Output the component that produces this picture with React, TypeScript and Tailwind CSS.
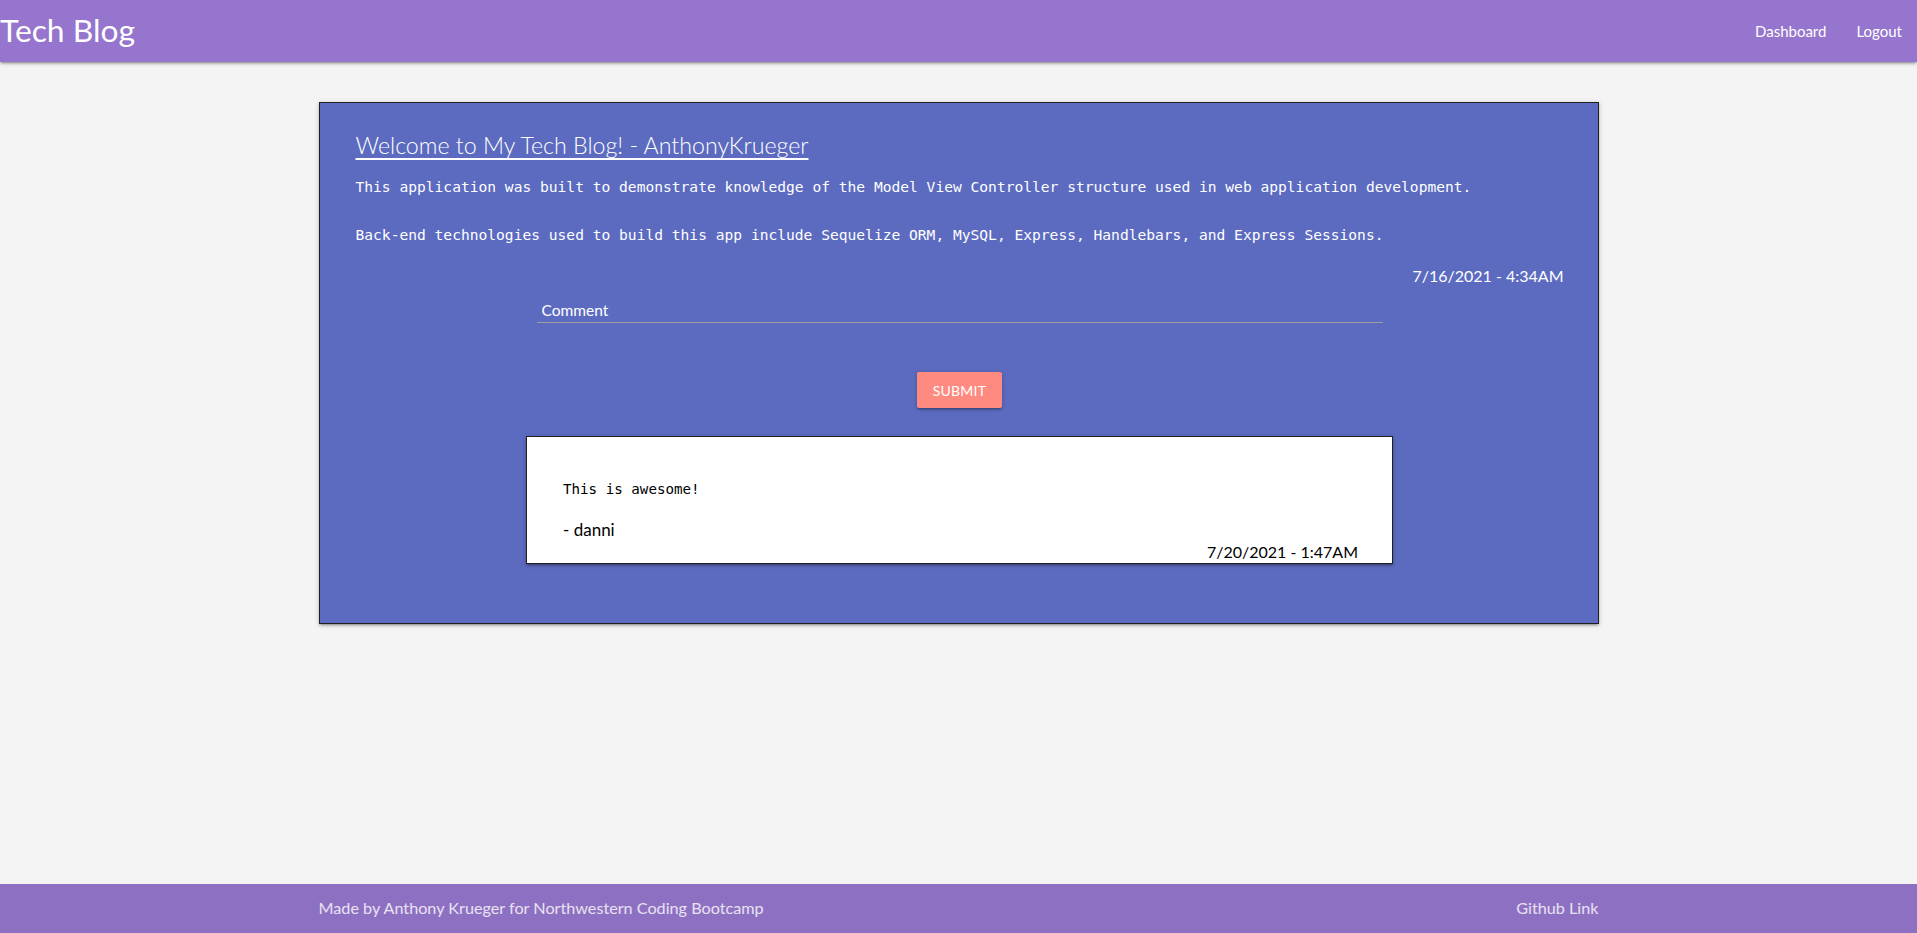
const SANS = "font-['Lato','Open_Sans',sans-serif]";
const MONO = "font-['DejaVu_Sans_Mono','Liberation_Mono',monospace]";

const post = {
  title: "Welcome to My Tech Blog! - AnthonyKrueger",
  body: [
    "This application was built to demonstrate knowledge of the Model View Controller structure used in web application development.",
    "Back-end technologies used to build this app include Sequelize ORM, MySQL, Express, Handlebars, and Express Sessions.",
  ],
  date: "7/16/2021 - 4:34AM",
};

const comments = [
  { id: 1, text: "This is awesome!", user: "danni", date: "7/20/2021 - 1:47AM" },
];

function Nav() {
  return (
    <nav className="relative z-10 flex h-[62px] items-center justify-between bg-[#9575cd] text-white shadow-[0_2px_2px_0_rgba(0,0,0,0.14),0_3px_1px_-2px_rgba(0,0,0,0.12),0_1px_5px_0_rgba(0,0,0,0.2)]">
      <a className="text-[31.8px] leading-none">Tech Blog</a>
      <ul className="flex text-[15px]">
        <li><a className="px-[15px]">Dashboard</a></li>
        <li><a className="px-[15px]">Logout</a></li>
      </ul>
    </nav>
  );
}

export default function App() {
  return (
    <div className={`flex min-h-screen flex-col bg-[#f4f4f4] ${SANS}`}>
      <Nav />

      <main className="flex-1 pt-[40px]">
        {/* Post card */}
        <div className="mx-auto h-[522px] w-[1280px] border border-[#1f1f1f] bg-[#5c6bc0] pl-[36px] pr-[34px] pt-[26px] text-white shadow-[0_2px_2px_0_rgba(0,0,0,0.14),0_3px_1px_-2px_rgba(0,0,0,0.12),0_1px_5px_0_rgba(0,0,0,0.2)]">
          <h2 className="text-[23.2px] font-light leading-[32px] underline underline-offset-[4px] decoration-[1.5px]">
            {post.title}
          </h2>
          <p className={`mt-[16px] text-[14.6px] leading-[20px] ${MONO}`}>{post.body[0]}</p>
          <p className={`mt-[28px] text-[14.6px] leading-[20px] ${MONO}`}>{post.body[1]}</p>
          <div className="mt-[19px] text-right text-[16px] leading-[24px]">{post.date}</div>

          {/* Comment form */}
          <div className="mx-auto mt-[12px] w-[846px] border-b border-[#9e9e9e] pb-[2px]">
            <label className="block pl-[5px] text-[15.5px] leading-[20px]">Comment</label>
          </div>
          <div className="mt-[49px] flex justify-center">
            <button className="h-[36px] rounded-[2px] bg-[#ff8a80] px-[16px] text-[14px] uppercase tracking-[0.2px] text-white shadow-[0_2px_2px_0_rgba(0,0,0,0.14),0_3px_1px_-2px_rgba(0,0,0,0.12),0_1px_5px_0_rgba(0,0,0,0.2)]">
              Submit
            </button>
          </div>

          {/* Comments */}
          {comments.map((c) => (
            <div
              key={c.id}
              className="mx-auto mt-[28px] h-[128px] w-[867px] border border-[#1f1f1f] bg-white pl-[36px] pr-[34px] pt-[42px] text-black shadow-[0_2px_2px_0_rgba(0,0,0,0.14),0_3px_1px_-2px_rgba(0,0,0,0.12),0_1px_5px_0_rgba(0,0,0,0.2)]"
            >
              <p className={`text-[14.2px] leading-[20px] ${MONO}`}>{c.text}</p>
              <p className="mt-[20px] text-[17px] leading-[22px]">- {c.user}</p>
              <div className="text-right text-[16px] leading-[22px]">{c.date}</div>
            </div>
          ))}
        </div>
      </main>

      <footer className="h-[49px] bg-[#8d70c1] text-[16.2px] text-white/80">
        <div className="mx-auto flex h-full w-[1280px] items-center justify-between">
          <span>Made by Anthony Krueger for Northwestern Coding Bootcamp</span>
          <a>Github Link</a>
        </div>
      </footer>
    </div>
  );
}
